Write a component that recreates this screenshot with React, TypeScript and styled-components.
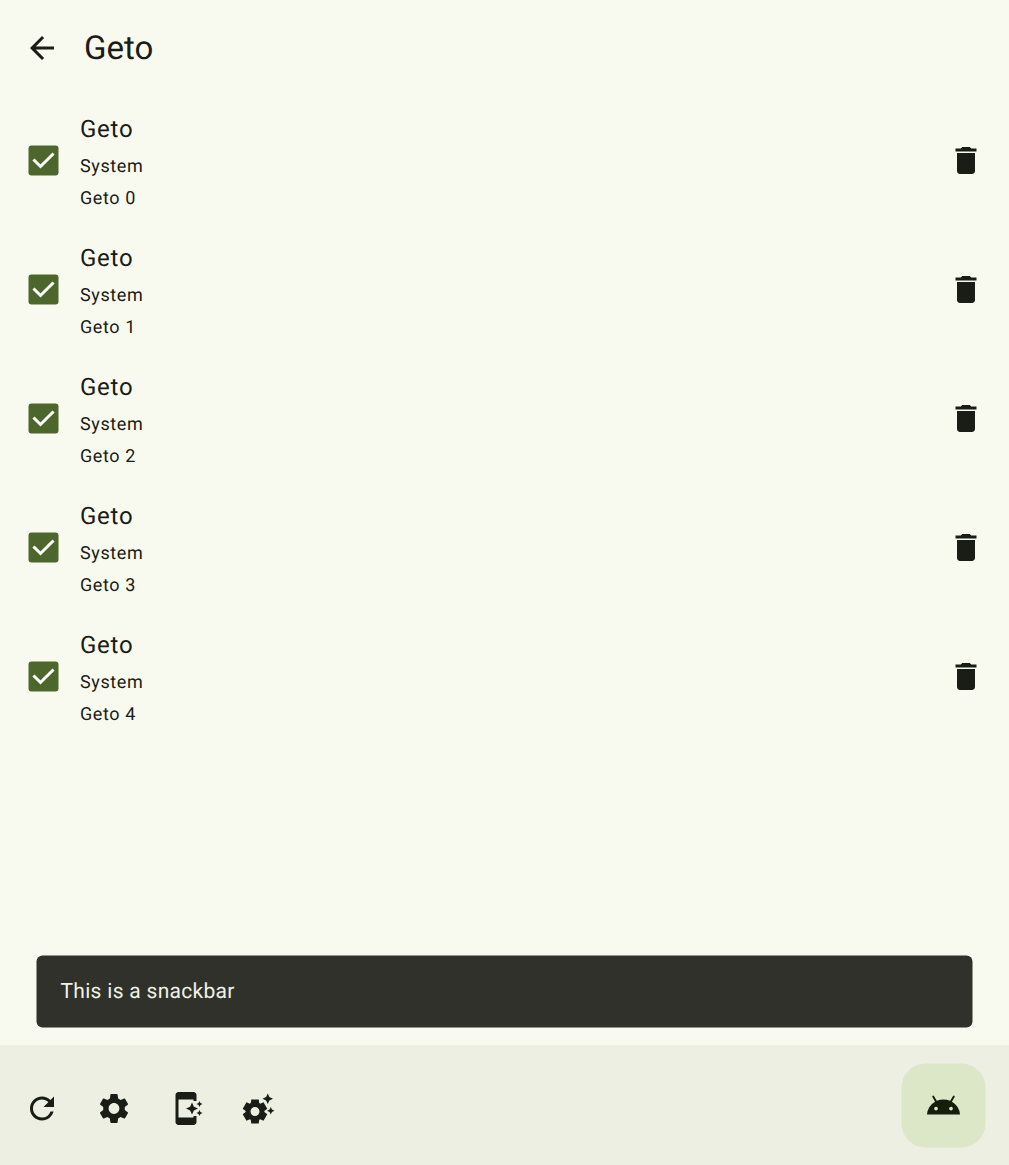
import React from "react";
import styled, { createGlobalStyle } from "styled-components";
import {
  MdArrowBack,
  MdDelete,
  MdRefresh,
  MdSettings,
  MdAppShortcut,
  MdSettingsSuggest,
  MdAndroid,
} from "react-icons/md";

const GlobalStyle = createGlobalStyle`
  * { box-sizing: border-box; }
  body {
    margin: 0;
    background: #f9faef;
    color: #1a1c16;
    font-family: Roboto, "Liberation Sans", sans-serif;
    text-rendering: geometricPrecision;
  }
`;

const Screen = styled.div`
  display: flex;
  flex-direction: column;
  height: 1165px;
  background: #f9faef;
`;

const TopBar = styled.header`
  display: flex;
  align-items: center;
  height: 96px;
  padding: 0 6px;
`;

const IconButton = styled.button<{ $nudge?: number }>`
  display: flex;
  align-items: center;
  justify-content: center;
  flex: none;
  width: 72px;
  height: 72px;
  padding: 0;
  border: 0;
  background: none;
  color: #1a1c16;
  font-size: 36px;
  transform: translateY(${(p) => p.$nudge ?? 0}px);
`;

const Title = styled.h1`
  margin: 2px 0 0 6px;
  font-size: 33px;
  line-height: 42px;
  font-weight: 400;
`;

const List = styled.ul`
  flex: 1;
  margin: 0;
  padding: 0;
  list-style: none;
`;

const Row = styled.li`
  display: flex;
  align-items: center;
  height: 129px;
  padding: 0 7px 0 28px;

  ${IconButton} {
    margin-bottom: 1px;
  }
`;

const Box = styled.span`
  display: flex;
  flex: none;
  width: 31px;
  height: 31px;
`;

const Texts = styled.div`
  display: flex;
  flex: 1;
  flex-direction: column;
  height: 99px;
  margin-left: 21px;
`;

const Label = styled.span`
  margin-bottom: 8px;
  font-size: 24px;
  line-height: 36px;
  letter-spacing: 0.75px;
`;

const Detail = styled.span`
  font-size: 18px;
  line-height: 24px;
  letter-spacing: 0.6px;

  & + & {
    margin-top: 8px;
  }
`;

const Snackbar = styled.div`
  display: flex;
  align-items: center;
  height: 72px;
  margin: 0 36px 17px 37px;
  padding: 0 24px;
  border-radius: 6px;
  background: #2f312a;
  color: #f1f2e6;
  font-size: 21px;
  line-height: 30px;
  letter-spacing: 0.3px;
  transform: translate(-0.5px, -0.5px);
`;

const BottomBar = styled.footer`
  display: flex;
  align-items: center;
  height: 120px;
  padding: 7px 24px 0 6px;
  background: #edefe2;
`;

const Fab = styled.button`
  display: flex;
  align-items: center;
  justify-content: center;
  align-self: flex-start;
  width: 84px;
  height: 84px;
  margin: 12px 0 0 auto;
  padding: 0;
  border: 0;
  border-radius: 24px;
  background: #dce7c8;
  color: #151e0b;
  font-size: 36px;
  transform: translate(0.5px, -0.5px);
`;

const Checkbox = () => (
  <Box role="checkbox" aria-checked="true">
    <svg width="31" height="31" viewBox="0 0 31 31" fill="none">
      <rect x="0.5" y="0.5" width="30" height="30" rx="3" fill="#4c662b" />
      <path d="M6.5 15.5 12.5 21.5 24.5 9.5" stroke="#fff" strokeWidth="3" strokeLinecap="square" />
    </svg>
  </Box>
);

const settings = [0, 1, 2, 3, 4];

export default function App() {
  return (
    <Screen>
      <GlobalStyle />
      <TopBar>
        <IconButton><MdArrowBack /></IconButton>
        <Title>Geto</Title>
      </TopBar>
      <List>
        {settings.map((n) => (
          <Row key={n}>
            <Checkbox />
            <Texts>
              <Label>Geto</Label>
              <Detail>System</Detail>
              <Detail>Geto {n}</Detail>
            </Texts>
            <IconButton $nudge={0.5}><MdDelete /></IconButton>
          </Row>
        ))}
      </List>
      <Snackbar>This is a snackbar</Snackbar>
      <BottomBar>
        <IconButton $nudge={-0.5}><MdRefresh /></IconButton>
        <IconButton $nudge={-0.5}><MdSettings /></IconButton>
        <IconButton $nudge={-0.5}><MdAppShortcut /></IconButton>
        <IconButton $nudge={-0.5}><MdSettingsSuggest /></IconButton>
        <Fab><MdAndroid /></Fab>
      </BottomBar>
    </Screen>
  );
}
